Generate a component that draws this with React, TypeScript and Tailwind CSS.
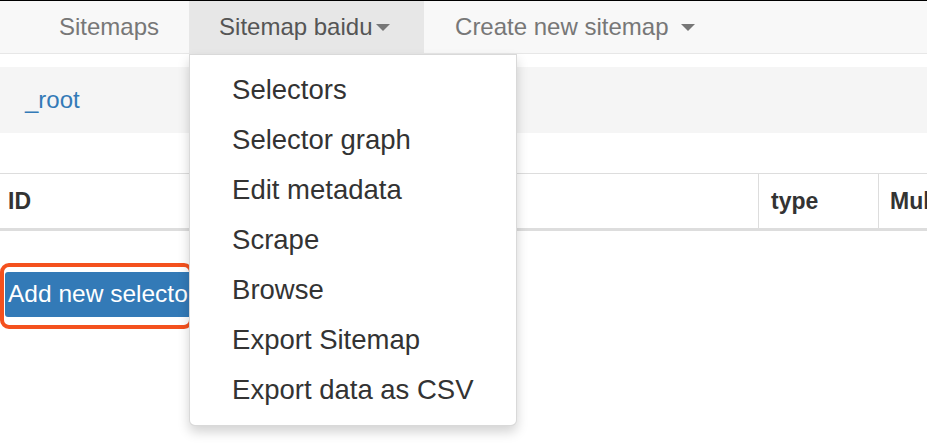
import React from 'react';

const menuItems = [
  'Selectors',
  'Selector graph',
  'Edit metadata',
  'Scrape',
  'Browse',
  'Export Sitemap',
  'Export data as CSV',
];

const Caret = ({ className = '' }: { className?: string }) => (
  <span className={`inline-block w-0 h-0 border-t-[7px] border-t-[#777] border-x-[7px] border-x-transparent ${className}`} />
);

const App: React.FC = () => {
  return (
    <div className="w-[927px] h-[448px] overflow-hidden bg-white border-t border-black font-['Liberation_Sans',Arial,sans-serif] relative">
      {/* navbar */}
      <nav className="h-[53px] bg-[#f8f8f8] border-b border-[#e7e7e7] flex pl-[29px] text-[24px] text-[#777]">
        <a className="px-[30px] flex items-center">Sitemaps</a>
        <div className="relative">
          <a className="h-full px-[30px] flex items-center bg-[#e7e7e7] text-[#555] w-[235px]">
            Sitemap baidu
            <Caret className="ml-[4px] border-t-[#555]" />
          </a>
          <ul className="absolute left-0 top-[53px] w-[328px] bg-white border border-black/15 rounded-b-[6px] shadow-[0_6px_12px_rgba(0,0,0,0.175)] py-[10px] z-10">
            {menuItems.map(item => (
              <li key={item} className="h-[50px] leading-[50px] pl-[42px] text-[27.5px] text-[#333] whitespace-nowrap">
                {item}
              </li>
            ))}
          </ul>
        </div>
        <a className="px-[31px] flex items-center whitespace-nowrap">
          Create new sitemap
          <Caret className="ml-[13px]" />
        </a>
      </nav>

      {/* breadcrumb */}
      <div className="mt-[13px] h-[66px] bg-[#f5f5f5] flex items-center pl-[25px] text-[24px] text-[#337ab7]">
        <a>_root</a>
      </div>

      {/* table header */}
      <div className="mt-[40px] w-[1100px] grid grid-cols-[758px_120px_1fr] border-t border-[#ddd] border-b-[3px] text-[23px] font-bold text-[#333]">
        <div className="h-[54px] flex items-center pl-[8px]">ID</div>
        <div className="h-[54px] flex items-center pl-[12px] border-l border-[#ddd]">type</div>
        <div className="h-[54px] flex items-center pl-[11px] border-l border-[#ddd]">Multiple</div>
      </div>

      {/* add selector button */}
      <div className="mt-[32px] w-[193px] h-[66px] border-[4px] border-[#f4511e] rounded-[9px] pt-[5px] pl-px">
        <button className="w-[260px] h-[45px] bg-[#337ab7] text-white text-[24.5px] text-left pl-[3px] rounded-[3px] whitespace-nowrap overflow-hidden">
          Add new selector
        </button>
      </div>
    </div>
  );
};

export default App;
